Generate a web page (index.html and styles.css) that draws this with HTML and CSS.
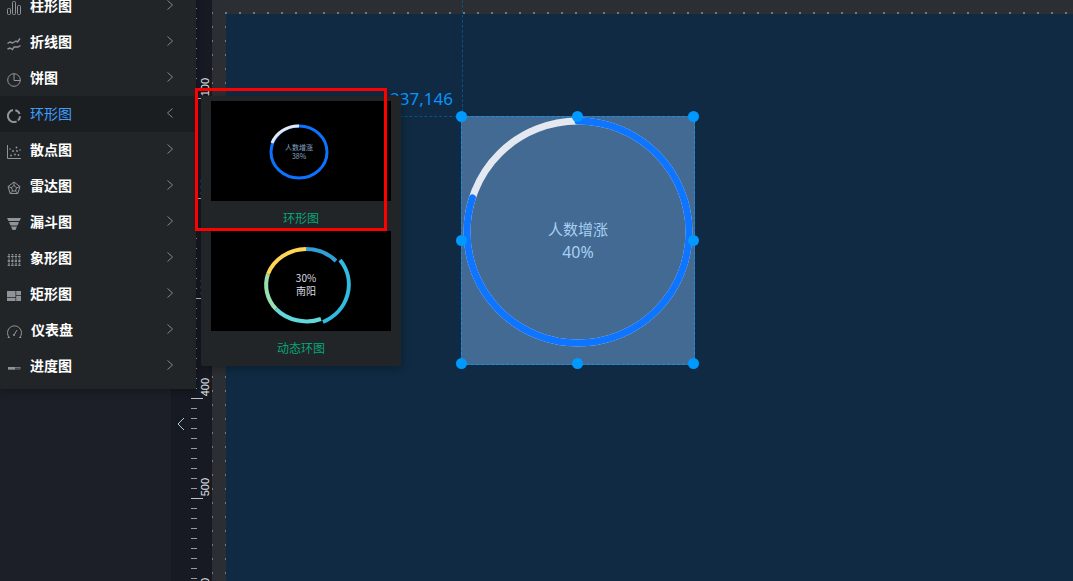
FILE: index.html
```
<!DOCTYPE html>
<html lang="zh-CN">
<head>
    <meta charset="UTF-8">
    <title>图表编辑器</title>
    <link rel="stylesheet" href="styles.css">
</head>
<body>
    <div class="editor">
        <aside class="sidebar"></aside>
        <button class="collapse" aria-label="收起">
            <svg width="8" height="14" viewBox="0 0 8 14"><path d="M7 1 1 7l6 6"/></svg>
        </button>
        <div class="ruler">
            <div class="mark"><span>100</span></div>
            <div class="mark"><span>200</span></div>
            <div class="mark"><span>300</span></div>
            <div class="mark"><span>400</span></div>
            <div class="mark"><span>500</span></div>
            <div class="mark"><span>600</span></div>
        </div>
        <main class="workspace">
            <div class="canvas"></div>
            <div class="guide-v"></div>
            <div class="guide-h"></div>
            <span class="coords">237,146</span>
            <div class="widget">
                <svg width="232" height="247" viewBox="0 0 232 247">
                    <circle class="ring-rest" cx="116" cy="115" r="111"/>
                    <circle class="ring-value" cx="116" cy="115" r="111" pathLength="100" transform="rotate(-90 116 115)"/>
                </svg>
                <div class="widget-text">
                    <span>人数增涨</span>
                    <span class="percent">40%</span>
                </div>
                <i class="handle top left"></i>
                <i class="handle top center"></i>
                <i class="handle top right"></i>
                <i class="handle middle left"></i>
                <i class="handle middle right"></i>
                <i class="handle bottom left"></i>
                <i class="handle bottom center"></i>
                <i class="handle bottom right"></i>
            </div>
        </main>
    </div>

    <nav class="menu">
        <button class="item">
            <svg class="icon" width="14" height="14" viewBox="0 0 14 14"><rect x=".5" y="7.5" width="3" height="6" rx="1"/><rect x="5.5" y=".5" width="3" height="13" rx="1"/><rect x="10.5" y="4.5" width="3" height="9" rx="1"/></svg>
            <span>柱形图</span>
            <svg class="arrow" width="6" height="10" viewBox="0 0 6 10"><path d="m.5.5 5 4.500-5 4.500"/></svg>
        </button>
        <button class="item">
            <svg class="icon" width="14" height="14" viewBox="0 0 14 14"><path d="M.5 6.500 3 5l2.500 1L9 4l1.500 1L13 1.500M.5 12 3 11l2.500 1.500L7 10h4l2.500-1.500" stroke-width="1.400"/></svg>
            <span>折线图</span>
            <svg class="arrow" width="6" height="10" viewBox="0 0 6 10"><path d="m.5.5 5 4.500-5 4.500"/></svg>
        </button>
        <button class="item">
            <svg class="icon" width="14" height="14" viewBox="0 0 14 14"><circle cx="7" cy="7" r="6.300"/><path d="M7 .7V7.500h6.300"/></svg>
            <span>饼图</span>
            <svg class="arrow" width="6" height="10" viewBox="0 0 6 10"><path d="m.5.5 5 4.500-5 4.500"/></svg>
        </button>
        <button class="item active">
            <svg class="icon" width="14" height="14" viewBox="0 0 14 14"><path d="M8.300 1.200A6 6 0 0 1 12.600 5M13 7.200A6 6 0 0 1 11 11.500M9.600 12.400A6 6 0 1 1 6 1.100" stroke-width="2"/></svg>
            <span>环形图</span>
            <svg class="arrow" width="6" height="10" viewBox="0 0 6 10"><path d="m5.500.5-5 4.500 5 4.500"/></svg>
        </button>
        <button class="item">
            <svg class="icon" width="14" height="14" viewBox="0 0 14 14"><path d="M.5 0v13.500H14"/><g class="solid"><circle cx="3" cy="4" r=".8"/><circle cx="6" cy="6" r="1"/><circle cx="9.500" cy="2.500" r=".9"/><circle cx="10" cy="6" r=".9"/><circle cx="13" cy="5" r=".8"/><circle cx="4" cy="10.500" r=".9"/><circle cx="8" cy="9.500" r=".9"/><circle cx="11.500" cy="10" r=".9"/></g></svg>
            <span>散点图</span>
            <svg class="arrow" width="6" height="10" viewBox="0 0 6 10"><path d="m.5.5 5 4.500-5 4.500"/></svg>
        </button>
        <button class="item">
            <svg class="icon" width="14" height="14" viewBox="0 0 14 14"><path d="m7 1 6 4.600L10.800 12.500H3.200L1 5.600zM7 1v4M1 5.600l4 1.400M13 5.600 9 7M3.200 12.500 5.500 10M10.800 12.500 8.500 10M7 4.500 4.500 6.700l1 3.300h3l1-3.300z"/></svg>
            <span>雷达图</span>
            <svg class="arrow" width="6" height="10" viewBox="0 0 6 10"><path d="m.5.5 5 4.500-5 4.500"/></svg>
        </button>
        <button class="item">
            <svg class="icon" width="14" height="14" viewBox="0 0 14 14"><path class="solid" d="M0 1h14l-1.500 3h-11zM2 5h10l-1.500 3.500h-7zM4 9.500h6L8.500 13h-3z"/></svg>
            <span>漏斗图</span>
            <svg class="arrow" width="6" height="10" viewBox="0 0 6 10"><path d="m.5.5 5 4.500-5 4.500"/></svg>
        </button>
        <button class="item">
            <svg class="icon" width="14" height="14" viewBox="0 0 14 14"><path d="M2 1v12M5.500 1v12M9 1v12M12.500 1v12" stroke-width="1.600" stroke-dasharray="1 .6 2 .8"/><path d="M.5 3.500h13M.5 8h13M.5 12.200h13" stroke-width="1" stroke-dasharray="2.600 .9"/></svg>
            <span>象形图</span>
            <svg class="arrow" width="6" height="10" viewBox="0 0 6 10"><path d="m.5.5 5 4.500-5 4.500"/></svg>
        </button>
        <button class="item">
            <svg class="icon" width="14" height="14" viewBox="0 0 14 14"><path class="solid" d="M0 2h8.500v6H0zM9.200 2H14v4H9.200zM0 8.700h8.500V12H0zM9.200 6.700H14V12H9.200z"/></svg>
            <span>矩形图</span>
            <svg class="arrow" width="6" height="10" viewBox="0 0 6 10"><path d="m.5.5 5 4.500-5 4.500"/></svg>
        </button>
        <button class="item">
            <svg class="icon" width="15" height="14" viewBox="0 0 15 14"><path d="M2.300 12.500a7 7 0 1 1 10.400 0M.7 12.500h2M12.300 12.500h2M7 10l3-5"/><circle cx="7" cy="10" r=".7"/></svg>
            <span>仪表盘</span>
            <svg class="arrow" width="6" height="10" viewBox="0 0 6 10"><path d="m.5.5 5 4.500-5 4.500"/></svg>
        </button>
        <button class="item">
            <svg class="icon" width="14" height="14" viewBox="0 0 14 14"><rect x="1.500" y="6.500" width="11.500" height="1.500" stroke-width=".7"/><path class="solid" d="M1 6h7v2.500H1z"/></svg>
            <span>进度图</span>
            <svg class="arrow" width="6" height="10" viewBox="0 0 6 10"><path d="m.5.5 5 4.500-5 4.500"/></svg>
        </button>
    </nav>

    <div class="flyout">
        <button class="card">
            <svg class="thumb" width="180" height="100" viewBox="0 0 180 100">
                <ellipse cx="88" cy="51" rx="28" ry="26" stroke="#0d73ff"/>
                <path d="M61 42A28 26 0 0 1 88 25" stroke="#e4e8f0"/>
                <text class="tiny" x="88" y="49">人数增涨</text>
                <text class="tiny" x="88" y="58">38%</text>
            </svg>
            <span>环形图</span>
        </button>
        <button class="card">
            <svg class="thumb thick" width="180" height="100" viewBox="0 0 180 100">
                <path d="M95 18A41 37 0 0 1 125 30" stroke="#2f9fd6"/>
                <path d="M129 29A44 41 0 0 1 112 91" stroke="#32bbe0"/>
                <path d="M110 88A41 37 0 0 1 65 78" stroke="#63d8dc"/>
                <path d="M65 78A41 37 0 0 1 57 43" stroke="#98e0b0"/>
                <path d="M57 43A41 37 0 0 1 95 18" stroke="#ffd556"/>
                <text class="small" x="95" y="51">30%</text>
                <text class="small" x="95" y="64">南阳</text>
            </svg>
            <span>动态环图</span>
        </button>
    </div>
    <div class="highlight"></div>
</body>
</html>
```
FILE: styles.css
```
* {
    box-sizing: border-box;
}

body {
    margin: 0;
    height: 100vh;
    overflow: hidden;
    position: relative;
    background-color: #171a23;
    font-family: "Noto Sans", "Noto Sans CJK SC", sans-serif;
}

button {
    border: none;
    padding: 0;
    background: none;
    font-family: "Noto Sans CJK SC", sans-serif;
    cursor: pointer;
}

svg {
    flex: none;
    fill: none;
}

.editor {
    display: flex;
    height: 100%;
}

.sidebar {
    width: 171px;
    background-color: #1d1f28;
}

.collapse {
    width: 20px;
    padding-top: 270px;
    stroke: #a8d0dc;
}

/* ruler */
.ruler {
    width: 21px;
    overflow: hidden;
}

.mark {
    display: flex;
    align-items: flex-end;
    height: 100px;
    padding: 0 0 4px 8px;
    background:
        linear-gradient(#c0c2c6, #c0c2c6) 0 98px / 12px 1px no-repeat,
        repeating-linear-gradient(transparent 0 8px, #989ba0 8px 9px, transparent 9px 10px) 0 0 / 6px 100px no-repeat;
}

.mark span {
    writing-mode: vertical-rl;
    transform: rotate(180deg);
    font-family: "Liberation Sans", sans-serif;
    font-size: 11px;
    line-height: 12px;
    color: #e0e2e6;
}

/* workspace */
.workspace {
    flex: 1;
    position: relative;
    padding: 14px 0 0 14px;
    background: radial-gradient(#74787e 1px, transparent 1px) 7px 6px / 14px 14px #2b2e32;
}

.canvas {
    height: 100%;
    background-color: #0f2a42;
}

.guide-v {
    position: absolute;
    left: 250px;
    top: 0;
    height: 117px;
    border-left: 1px dashed #0d4f80;
}

.guide-h {
    position: absolute;
    left: 14px;
    top: 116px;
    width: 236px;
    border-top: 1px dashed #0d4f80;
}

.coords {
    position: absolute;
    left: 178px;
    top: 87px;
    font-size: 17px;
    line-height: 24px;
    color: #0a93fa;
}

.widget {
    position: absolute;
    left: 249px;
    top: 116px;
    border: 1px dashed #1890e8;
    background-color: #426a93;
}

.widget svg {
    display: block;
}

.ring-rest {
    stroke: #e4e8f0;
    stroke-width: 7;
}

.ring-value {
    stroke: #0d75ff;
    stroke-width: 7;
    stroke-linecap: round;
    stroke-dasharray: 80 100;
}

.widget-text {
    position: absolute;
    top: 101px;
    left: 0;
    right: 0;
    display: flex;
    flex-direction: column;
    align-items: center;
    font-size: 15px;
    line-height: 23px;
    color: #a8d0f2;
}

.percent {
    font-size: 16px;
}

.handle {
    position: absolute;
    width: 11px;
    height: 11px;
    border-radius: 50%;
    background-color: #0099ff;
}

.top { top: -6px; }
.middle { top: 118px; }
.bottom { bottom: -5px; }
.left { left: -6px; }
.center { left: 110px; }
.right { right: -5px; }

/* chart type menu */
.menu {
    position: absolute;
    left: 0;
    top: -12px;
    width: 196px;
    padding-bottom: 5px;
    background-color: #222527;
    box-shadow: 0 2px 8px rgba(0, 0, 0, 0.3);
}

.item {
    display: flex;
    align-items: center;
    gap: 9px;
    width: 100%;
    height: 36px;
    padding: 0 23px 2px 7px;
    font-size: 14px;
    font-weight: bold;
    color: #fff;
}

.item.active {
    background-color: #1b1e20;
    font-weight: normal;
    color: #409eff;
}

.icon {
    margin-top: 6px;
    stroke: #909399;
}

.solid {
    fill: #909399;
    stroke: none;
}

.arrow {
    margin-left: auto;
    stroke: #84878b;
}

/* sub menu */
.flyout {
    position: absolute;
    left: 201px;
    top: 96px;
    padding: 5px 10px;
    border-radius: 2px;
    background-color: #222527;
    box-shadow: 0 2px 8px rgba(0, 0, 0, 0.3);
}

.card {
    display: block;
    font-size: 12px;
    line-height: 30px;
    color: #07a47c;
}

.card span {
    display: block;
    height: 30px;
    padding-top: 2px;
}

.thumb {
    display: block;
    background-color: #000;
    stroke-width: 3;
}

.thick {
    stroke-width: 4;
}

.thumb text {
    fill: #d8dce4;
    stroke: none;
    text-anchor: middle;
}

.thumb .tiny {
    font-size: 7px;
    fill: #86a4c4;
}

.thumb .small {
    font-size: 10px;
}

.highlight {
    position: absolute;
    left: 195px;
    top: 88px;
    width: 192px;
    height: 143px;
    border: 3px solid #ff0000;
    pointer-events: none;
}
```
